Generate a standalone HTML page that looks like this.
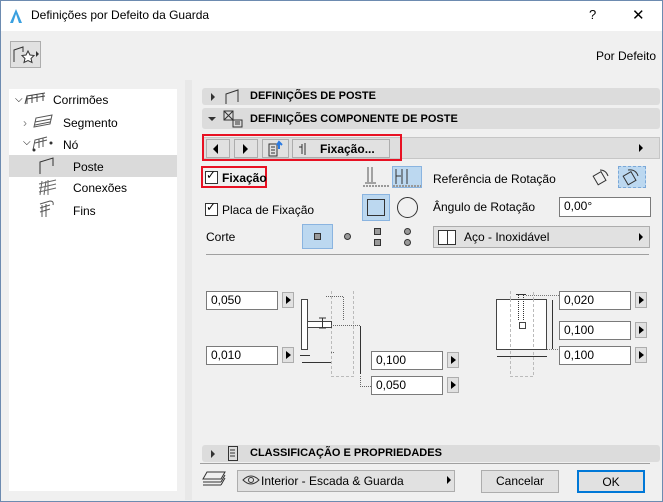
<!DOCTYPE html>
<html><head><meta charset="utf-8"><style>
*{box-sizing:border-box;margin:0;padding:0}
body{width:663px;height:502px;overflow:hidden;font-family:"Liberation Sans",sans-serif;font-size:12px;color:#000;background:#f0f0f0;position:relative}
.a{position:absolute}
.win{left:0;top:0;width:663px;height:502px;border:1px solid #6d8bb0;background:#f0f0f0}
.title{left:1px;top:1px;width:661px;height:30px;background:#fff}
.tree{left:9px;top:89px;width:168px;height:402px;background:#fff}
.hdr{background:#dcdcdc;border-radius:3px;font-weight:bold;font-size:11px;line-height:17px}
.fld{background:#fff;border:1px solid #7a7a7a;height:19px;padding-left:4px;line-height:17px;font-size:12px}
.ab{width:12px;height:16px;background:#e1e1e1;border:1px solid #adadad}
.ab:after{content:"";position:absolute;left:3px;top:3px;border-left:5px solid #000;border-top:4px solid transparent;border-bottom:4px solid transparent}
.btn{background:#e1e1e1;border:1px solid #adadad;text-align:center;line-height:20px}
.tri{border-left:4px solid #333;border-top:4px solid transparent;border-bottom:4px solid transparent;width:0;height:0}
.cb{width:13px;height:13px;border:1px solid #333;background:#fff}
.red{border:2px solid #e81123}
</style></head><body>
<div class="a win"></div>
<div class="a title"></div>
<svg class="a" style="left:9px;top:8px" width="14" height="16"><path d="M1 15 L7 1 L13 15 Z" fill="#3aa0e0"/><path d="M4 15 L7 6 L10 15Z" fill="#fff"/></svg>
<div class="a" style="left:31px;top:8px;font-size:12px">Definições por Defeito da Guarda</div>
<div class="a" style="left:589px;top:7px;font-size:13px">?</div>
<div class="a" style="left:632px;top:6px;font-size:15px">✕</div>
<div class="a" style="left:10px;top:41px;width:31px;height:27px;border:1px solid #adadad;background:#e1e1e1"></div>
<svg class="a" style="left:12px;top:44px" width="28" height="22"><path d="M2 18 V6 L11 3 V8" fill="none" stroke="#333"/><path d="M16 7 l2 4 4 0.5 -3 3 1 4 -4 -2 -4 2 1 -4 -3 -3 4 -0.5z" fill="#fff" stroke="#333"/><path d="M24 7 l3 3 -3 3z" fill="#333"/></svg>
<div class="a" style="left:596px;top:49px">Por Defeito</div>
<div class="a tree"></div>
<div class="a" style="left:185px;top:80px;width:7px;height:420px;background:#e8e8e8"></div>
<div class="a" style="left:9px;top:155px;width:168px;height:22px;background:#dadada"></div>
<div class="a" style="left:15px;top:94px;font-size:10px">⌵</div>
<svg class="a" style="left:23px;top:92px" width="26" height="14"><path d="M2 12 L4 4 L22 1 M4 4 L4 12 M9 3 V11 M14 2 V10 M20 1 V9 M4 7 L22 4" fill="none" stroke="#444"/></svg>
<div class="a" style="left:53px;top:93px">Corrimões</div>
<div class="a" style="left:23px;top:116px;color:#888">›</div>
<svg class="a" style="left:32px;top:114px" width="24" height="14"><path d="M2 13 L4 4 L20 1 L18 10 Z M3 8 L19 5 M3 11 L18 8" fill="none" stroke="#555"/></svg>
<div class="a" style="left:63px;top:116px">Segmento</div>
<div class="a" style="left:23px;top:137px;font-size:10px">⌵</div>
<svg class="a" style="left:31px;top:136px" width="24" height="16"><path d="M2 14 L4 4 L16 1 M4 7 L16 4 M8 3 V12 M12 2 V11" fill="none" stroke="#555"/><circle cx="20" cy="7" r="1.5" fill="#333"/><circle cx="3" cy="14" r="1.5" fill="#333"/></svg>
<div class="a" style="left:63px;top:138px">Nó</div>
<svg class="a" style="left:38px;top:157px" width="18" height="18"><path d="M2 17 V5 L15 1 V9" fill="none" stroke="#333"/></svg>
<div class="a" style="left:73px;top:160px">Poste</div>
<svg class="a" style="left:38px;top:178px" width="20" height="18"><path d="M2 17 L4 3 M6 17 L8 3 M1 6 L18 2 M1 10 L18 6 M1 14 L18 10 M10 2 V17" fill="none" stroke="#666"/></svg>
<div class="a" style="left:73px;top:181px">Conexões</div>
<svg class="a" style="left:38px;top:200px" width="18" height="18"><path d="M2 4 L12 1 Q16 1 15 5 M4 17 L4 5 M8 17 L8 4 M2 8 L12 5 M2 12 L12 9" fill="none" stroke="#555"/></svg>
<div class="a" style="left:73px;top:204px">Fins</div>

<div class="a hdr" style="left:202px;top:88px;width:458px;height:17px"></div>
<div class="a tri" style="left:211px;top:93px"></div>
<svg class="a" style="left:224px;top:89px" width="18" height="16"><path d="M2 15 V5 L14 1 V13" fill="none" stroke="#333"/></svg>
<div class="a" style="left:250px;top:90px;font-weight:bold;font-size:11px">DEFINIÇÕES DE POSTE</div>
<div class="a hdr" style="left:202px;top:108px;width:458px;height:21px"></div>
<div class="a" style="left:208px;top:117px;border-top:4px solid #333;border-left:4px solid transparent;border-right:4px solid transparent;width:0"></div>
<svg class="a" style="left:222px;top:109px" width="22" height="20"><rect x="2" y="2" width="9" height="9" fill="none" stroke="#333"/><path d="M2 2 L11 11 M2 11 L11 2" stroke="#333"/><rect x="11" y="11" width="9" height="7" fill="none" stroke="#333"/><path d="M13 13h5M13 15h5" stroke="#333"/></svg>
<div class="a" style="left:250px;top:113px;font-weight:bold;font-size:11px">DEFINIÇÕES COMPONENTE DE POSTE</div>

<div class="a" style="left:202px;top:137px;width:458px;height:22px;background:#dedede;border:1px solid #c6c6c6"></div>
<div class="a btn" style="left:206px;top:139px;width:24px;height:19px"></div>
<div class="a" style="left:213px;top:144px;border-right:5px solid #000;border-top:5px solid transparent;border-bottom:5px solid transparent"></div>
<div class="a btn" style="left:234px;top:139px;width:24px;height:19px"></div>
<div class="a" style="left:243px;top:144px;border-left:5px solid #000;border-top:5px solid transparent;border-bottom:5px solid transparent"></div>
<div class="a btn" style="left:262px;top:139px;width:27px;height:19px"></div>
<svg class="a" style="left:266px;top:140px" width="20" height="18"><path d="M3 4 H11 V16 H3 Z M5 7h4M5 10h4M5 13h4" fill="none" stroke="#333"/><path d="M13 9 V3 M11 5 L13 2 L16 5" fill="none" stroke="#2a7ae2" stroke-width="2"/></svg>
<div class="a btn" style="left:292px;top:139px;width:98px;height:19px"></div>
<svg class="a" style="left:296px;top:142px" width="14" height="14"><path d="M3 5 H6 M6 2 V12 M9 1 V13" fill="none" stroke="#333"/></svg>
<div class="a" style="left:320px;top:142px;font-weight:bold">Fixação...</div>
<div class="a tri" style="left:639px;top:144px;border-left-color:#000"></div>
<div class="a red" style="left:202px;top:134px;width:200px;height:27px"></div>

<div class="a red" style="left:201px;top:166px;width:66px;height:22px"></div>
<div class="a cb" style="left:205px;top:171px"></div><div class="a" style="left:206px;top:168px;font-size:12px">✓</div>
<div class="a" style="left:222px;top:171px;font-weight:bold">Fixação</div>
<svg class="a" style="left:362px;top:166px" width="28" height="22"><path d="M6 1 V16 M10 1 V16 M3 17 H14" stroke="#555" fill="none"/><path d="M1 20 H27" stroke="#999" stroke-dasharray="2 1" stroke-width="2"/></svg>
<div class="a" style="left:392px;top:166px;width:30px;height:22px;background:#bcd8f0;border:1px solid #8ab4e0"></div>
<svg class="a" style="left:392px;top:166px" width="30" height="22"><path d="M4 3 V18 M4 10 H9 M10 3 V18 M15 3 V18" stroke="#333" fill="none"/><path d="M1 20 H29" stroke="#999" stroke-dasharray="2 1" stroke-width="2"/></svg>
<div class="a" style="left:433px;top:172px">Referência de Rotação</div>
<svg class="a" style="left:590px;top:166px" width="24" height="22"><rect x="5" y="7" width="9" height="10" transform="rotate(-30 10 12)" fill="none" stroke="#333"/><path d="M10 4 Q16 4 18 10" fill="none" stroke="#333"/></svg>
<div class="a" style="left:618px;top:166px;width:28px;height:22px;background:#bcd8f0;border:1px dashed #7aa8d8"></div>
<svg class="a" style="left:620px;top:166px" width="24" height="22"><rect x="5" y="7" width="9" height="10" transform="rotate(-30 10 12)" fill="none" stroke="#333"/><path d="M8 4 Q16 3 18 10" fill="none" stroke="#333"/></svg>

<div class="a cb" style="left:205px;top:203px"></div><div class="a" style="left:206px;top:200px;font-size:12px">✓</div>
<div class="a" style="left:222px;top:203px">Placa de Fixação</div>
<div class="a" style="left:362px;top:194px;width:28px;height:27px;background:#bcd8f0;border:1px solid #8ab4e0"></div>
<div class="a" style="left:367px;top:199px;width:18px;height:17px;border:1px solid #333"></div>
<div class="a" style="left:397px;top:197px;width:21px;height:21px;border:1px solid #333;border-radius:50%"></div>
<div class="a" style="left:433px;top:200px">Ângulo de Rotação</div>
<div class="a fld" style="left:559px;top:197px;width:92px;height:20px">0,00°</div>

<div class="a" style="left:206px;top:230px">Corte</div>
<div class="a" style="left:302px;top:224px;width:31px;height:25px;background:#bcd8f0;border:1px solid #8ab4e0"></div>
<div class="a" style="left:314px;top:233px;width:7px;height:7px;border:1px solid #333;background:#999"></div>
<div class="a" style="left:344px;top:233px;width:7px;height:7px;border:1px solid #333;border-radius:50%;background:#999"></div>
<div class="a" style="left:374px;top:228px;width:7px;height:7px;border:1px solid #333;background:#999"></div>
<div class="a" style="left:374px;top:239px;width:7px;height:7px;border:1px solid #333;background:#999"></div>
<div class="a" style="left:404px;top:228px;width:7px;height:7px;border:1px solid #333;border-radius:50%;background:#999"></div>
<div class="a" style="left:404px;top:239px;width:7px;height:7px;border:1px solid #333;border-radius:50%;background:#999"></div>
<div class="a btn" style="left:433px;top:226px;width:217px;height:22px"></div>
<div class="a" style="left:438px;top:230px;width:18px;height:15px;border:1px solid #333;background:#fff"></div>
<div class="a" style="left:447px;top:230px;width:1px;height:15px;background:#333"></div>
<div class="a" style="left:464px;top:230px">Aço - Inoxidável</div>
<div class="a tri" style="left:639px;top:233px;border-left-color:#000"></div>

<div class="a" style="left:206px;top:254px;width:443px;height:1px;background:#a0a0a0"></div>

<div class="a fld" style="left:206px;top:291px;width:72px">0,050</div><div class="a ab" style="left:282px;top:292px"></div>
<div class="a fld" style="left:206px;top:346px;width:72px">0,010</div><div class="a ab" style="left:282px;top:347px"></div>
<div class="a fld" style="left:371px;top:351px;width:72px">0,100</div><div class="a ab" style="left:447px;top:352px"></div>
<div class="a fld" style="left:371px;top:376px;width:72px">0,050</div><div class="a ab" style="left:447px;top:377px"></div>
<div class="a fld" style="left:559px;top:291px;width:72px">0,020</div><div class="a ab" style="left:635px;top:292px"></div>
<div class="a fld" style="left:559px;top:321px;width:72px">0,100</div><div class="a ab" style="left:635px;top:322px"></div>
<div class="a fld" style="left:559px;top:346px;width:72px">0,100</div><div class="a ab" style="left:635px;top:347px"></div>

<svg class="a" style="left:295px;top:285px" width="80" height="105">
<g stroke="#bbb" stroke-dasharray="3 2" fill="none"><path d="M36.5 6 V91.5 H58.5 V6"/></g>
<g fill="#fff" stroke="#444"><rect x="6.5" y="14.5" width="6" height="50"/><rect x="12.5" y="36.5" width="24" height="6"/></g>
<g stroke="#666" stroke-dasharray="1 1" fill="none"><path d="M31 11.5 H48.5 V35 M36 40.5 H65 M36 67.5 H40 M65.5 91 V101.5 H76"/></g>
<g stroke="#333" fill="none"><path d="M27.5 33 V43 M24 33 H31 M24 43 H31 M5 70.5 H15 M7 77.5 H36 M65.5 41 V89"/></g></svg>
<svg class="a" style="left:495px;top:285px" width="66" height="95">
<g stroke="#bbb" stroke-dasharray="3 2" fill="none"><path d="M15.5 6 V91.5 H38.5 V6"/></g>
<rect x="1.5" y="14.5" width="50" height="50" fill="#fff" stroke="#444"/><rect x="24.5" y="37.5" width="6" height="6" fill="#fff" stroke="#444"/>
<g stroke="#bbb" stroke-dasharray="3 2" fill="none"><path d="M15.5 14 V64 M38.5 14 V64"/></g>
<g stroke="#333" fill="none"><path d="M23.5 10 V35 M28.5 10 V35" stroke-dasharray="1 1"/><path d="M21 9.5 H31 M2 71.5 H52 M57.5 15 V64"/><path d="M31 10.5 H64 M52 64.5 H64" stroke-dasharray="1 1" stroke="#777"/></g></svg>

<div class="a hdr" style="left:202px;top:445px;width:458px;height:17px"></div>
<div class="a tri" style="left:211px;top:450px"></div>
<svg class="a" style="left:226px;top:445px" width="14" height="17"><rect x="2.5" y="1.5" width="9" height="14" fill="none" stroke="#333"/><path d="M4 5h5M4 8h5M4 11h5" stroke="#333"/></svg>
<div class="a" style="left:250px;top:447px;font-weight:bold;font-size:11px">CLASSIFICAÇÃO E PROPRIEDADES</div>
<div class="a" style="left:200px;top:463px;width:450px;height:1px;background:#a0a0a0"></div>

<svg class="a" style="left:201px;top:470px" width="26" height="18"><path d="M6 2 H24 L20 9 H2 Z M2 12 H20 M2 15 H20 M24 5 L20 12 M24 8 L20 15" fill="none" stroke="#333"/></svg>
<div class="a btn" style="left:237px;top:470px;width:218px;height:22px;border-color:#adadad"></div>
<svg class="a" style="left:242px;top:474px" width="18" height="12"><path d="M1 6 Q9 -2 17 6 Q9 14 1 6Z" fill="none" stroke="#333"/><circle cx="9" cy="6" r="2.5" fill="none" stroke="#333"/></svg>
<div class="a" style="left:261px;top:474px">Interior - Escada &amp; Guarda</div>
<div class="a tri" style="left:447px;top:476px;border-left-color:#000"></div>
<div class="a btn" style="left:481px;top:470px;width:78px;height:23px">Cancelar</div>
<div class="a btn" style="left:577px;top:470px;width:68px;height:23px;border:2px solid #0078d7">OK</div>
</body></html>
